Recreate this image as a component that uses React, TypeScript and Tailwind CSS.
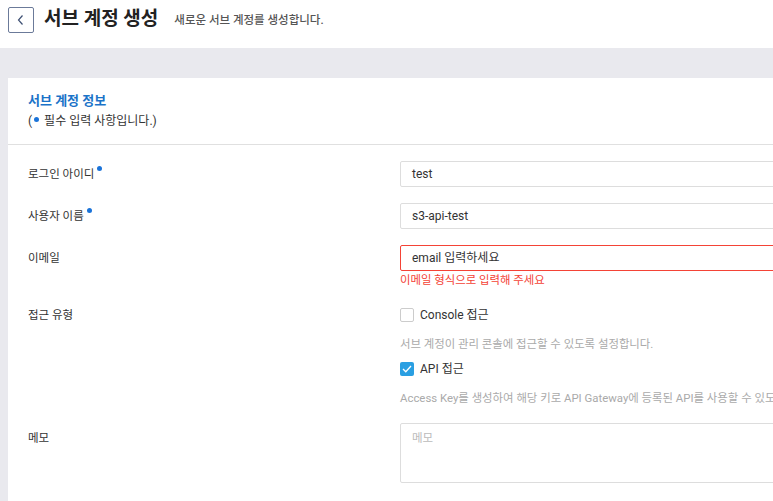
import React from 'react';

const font = { fontFamily: 'Roboto, "Noto Sans CJK KR", sans-serif' };

const Dot = () => <span className="inline-block w-[5px] h-[5px] rounded-full bg-[#1a73d9] align-top ml-[3px] mt-[1px]" />;

const Row = ({ label, required, children, className = '', labelClass = '' }: { label: string; required?: boolean; children: React.ReactNode; className?: string; labelClass?: string }) => (
  <div className={`flex ${className}`}>
    <div className={`w-[392px] shrink-0 pl-[20px] text-[11.5px] text-[#333] leading-[18px] ${labelClass}`}>
      {label}
      {required && <Dot />}
    </div>
    <div className="flex-1">{children}</div>
  </div>
);

export default function App() {
  return (
    <div className="w-[773px] h-[501px] overflow-hidden bg-[#e9e9ee]" style={font}>
      <div className="h-[48px] bg-white flex items-center pl-[8px]">
        <button className="w-[26px] h-[26px] border border-[#6b7a99] rounded-[2px] flex items-center justify-center mt-[-8px]">
          <svg width="10" height="12" viewBox="0 0 10 12" fill="none">
            <path d="M6.5 1.5 L2.5 6 L6.5 10.5" stroke="#3d4f73" strokeWidth="1.2" />
          </svg>
        </button>
        <h1 className="ml-[10px] text-[19px] font-bold text-[#222] mt-[-9px]">서브 계정 생성</h1>
        <p className="ml-[16px] text-[11.5px] font-medium text-[#555] mt-[-6px]">새로운 서브 계정를 생성합니다.</p>
      </div>
      <div className="pt-[30px] pl-[8px]">
        <div className="bg-white w-[900px] h-[450px]">
          <div className="pl-[20px] pt-[13px] pb-[14px] border-b border-[#e0e0e0]">
            <h2 className="text-[13px] font-bold text-[#1a73c8] leading-[20px]">서브 계정 정보</h2>
            <p className="text-[12px] text-[#333] leading-[18px] mt-[1px]">
              (<span className="inline-block w-[5px] h-[5px] rounded-full bg-[#1a73d9] align-top mt-[5px] mx-[2px]" /> 필수 입력 사항입니다.)
            </p>
          </div>
          <div className="pt-[16px]">
            <Row label="로그인 아이디" required className="items-center h-[26px]">
              <div className="h-[26px] border border-[#ddd] rounded-[2px] flex items-center pl-[11px] text-[12px] text-[#333]">test</div>
            </Row>
            <Row label="사용자 이름" required className="items-center h-[26px] mt-[16px]">
              <div className="h-[26px] border border-[#ddd] rounded-[2px] flex items-center pl-[11px] text-[12px] text-[#333]">s3-api-test</div>
            </Row>
            <Row label="이메일" className="items-start mt-[16px]" labelClass="pt-[4px]">
              <div className="h-[26px] border border-[#f44336] rounded-[2px] flex items-center pl-[11px] text-[12px] text-[#333]">email 입력하세요</div>
              <p className="text-[11.4px] text-[#f44336] leading-[17px] mt-[1px]">이메일 형식으로 입력해 주세요</p>
            </Row>
            <Row label="접근 유형" className="items-start mt-[18px]" labelClass="-mt-[1px]">
              <div className="flex items-center gap-[6px] h-[16px]">
                <span className="w-[14px] h-[14px] border border-[#ccc] rounded-[2px] bg-white" />
                <span className="text-[12px] text-[#333]">Console 접근</span>
              </div>
              <p className="text-[11.4px] text-[#aaa] mt-[13px] leading-[16px]">서브 계정이 관리 콘솔에 접근할 수 있도록 설정합니다.</p>
              <div className="flex items-center gap-[6px] h-[16px] mt-[9px]">
                <span className="w-[14px] h-[14px] rounded-[2px] bg-[#2a9fe2] flex items-center justify-center">
                  <svg width="10" height="8" viewBox="0 0 10 8" fill="none">
                    <path d="M1 4 L3.8 6.8 L9 1" stroke="white" strokeWidth="1.3" />
                  </svg>
                </span>
                <span className="text-[12px] text-[#333]">API 접근</span>
              </div>
              <p className="text-[11.4px] text-[#aaa] mt-[13px] leading-[16px] whitespace-nowrap">Access Key를 생성하여 해당 키로 API Gateway에 등록된 API를 사용할 수 있도록 설정합니다.</p>
            </Row>
            <Row label="메모" className="items-start mt-[17px]" labelClass="pt-[6px]">
              <div className="h-[60px] border border-[#ddd] rounded-[2px] pl-[11px] pt-[6px] text-[11.5px] text-[#bbb]">메모</div>
            </Row>
          </div>
        </div>
      </div>
    </div>
  );
}
